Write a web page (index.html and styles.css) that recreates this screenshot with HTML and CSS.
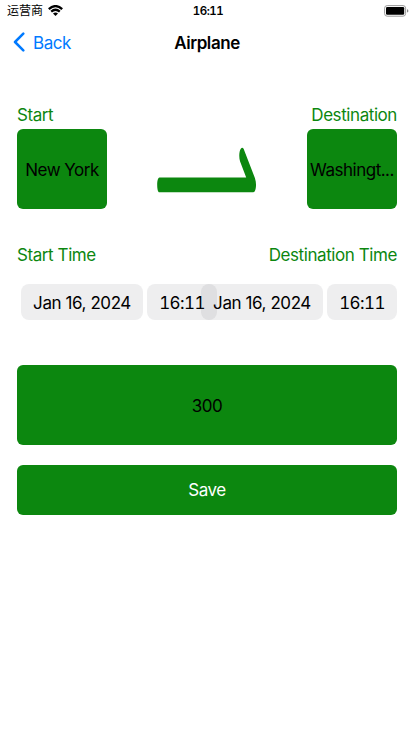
FILE: index.html
```html
<!DOCTYPE html>
<html lang="en">
<head>
<meta charset="utf-8">
<meta name="viewport" content="width=device-width, initial-scale=1">
<title>Airplane</title>
<link rel="stylesheet" href="styles.css">
</head>
<body>
<header class="status">
  <div class="carrier"><span lang="zh">运营商</span>
    <svg class="wifi" width="15" height="11" viewBox="0 0 15 11"><g fill="none" stroke="#000" stroke-width="2.3"><path d="M.8 4.1Q7.5-1.9 14.2 4.1"/><path d="M3.2 6.7Q7.5 2.8 11.8 6.7"/></g><path d="M5 8.5Q7.5 6.5 10 8.5L7.5 11Z"/></svg>
  </div>
  <span class="clock">16:11</span>
  <svg class="battery" width="25" height="12" viewBox="0 0 25 12"><rect x=".6" y=".6" width="21" height="10.6" rx="2.6" fill="#fff" stroke="#999" stroke-width="1"/><rect x="2" y="2" width="18.2" height="7.8" rx="1.2"/><path d="M23 4.2Q24.4 4.6 24.4 5.9T23 7.6Z" fill="#888"/></svg>
</header>
<nav class="nav">
  <a class="back"><svg width="12" height="20" viewBox="0 0 12 20"><path d="M10.3 1.6 2 10l8.3 8.4" fill="none" stroke="#007aff" stroke-width="2.5" stroke-linecap="round" stroke-linejoin="round"/></svg><span>Back</span></a>
  <h1>Airplane</h1>
</nav>
<main>
  <section class="route">
    <div class="place"><label>Start</label><button class="box">New York</button></div>
    <svg class="plane" width="100" height="46" viewBox="0 0 100 46"><path d="M2.5 30.6H89.2L83.1 14.5C81.8 10.5 82 4.5 83.8 1.8Q85.2-.2 86.6 1.8L97.9 31C99.5 35.5 99.3 41 97.9 44Q97.3 45.3 96 45.3H2.5C.8 45.3.2 41.5.2 38S.8 30.6 2.5 30.6Z" fill="#0c870f"/></svg>
    <div class="place end"><label>Destination</label><button class="box">Washingt...</button></div>
  </section>
  <section class="labels"><label>Start Time</label><label>Destination Time</label></section>
  <section class="pickers">
    <div class="picker"><span class="chip date">Jan 16, 2024</span><span class="chip time">16:11</span></div>
    <div class="picker second"><span class="chip date">Jan 16, 2024</span><span class="chip time">16:11</span></div>
  </section>
  <button class="box amount">300</button>
  <button class="box save">Save</button>
</main>
</body>
</html>
```
FILE: styles.css
```css
* { box-sizing: border-box; }
body { margin: 0; min-height: 736px; background: #fff; color: #000; font: 17px/20px Inter, "Noto Sans CJK SC", sans-serif; letter-spacing: -0.42px; }
svg { display: block; }
h1, button { margin: 0; font: inherit; letter-spacing: inherit; }
.status { display: grid; grid-template-columns: 1fr auto 1fr; height: 20px; padding: 0 5px 0 7px; align-items: center; font-size: 12px; }
.carrier { display: flex; align-items: center; gap: 5px; letter-spacing: 0; padding-top: 1px; }
.wifi { margin-top: -2px; }
.clock { font-weight: 600; font-size: 11.5px; letter-spacing: -0.45px; font-variant-numeric: tabular-nums; padding-top: 1px; }
.battery { justify-self: end; }
.nav { display: grid; grid-template-columns: 1fr auto 1fr; height: 44px; align-items: center; padding: 0 13px; }
.back { display: flex; align-items: center; gap: 8px; color: #007aff; }
.back span, .nav h1 { padding-top: 1px; }
.nav h1 { font-weight: 600; }
main { padding: 41px 17px 0; }
label { display: block; color: #0c870f; white-space: nowrap; }
.route { display: flex; justify-content: space-between; }
.place { width: 90px; }
.end { display: flex; flex-direction: column; align-items: flex-end; }
.box { display: flex; align-items: center; justify-content: center; width: 90px; height: 80px; margin-top: 4px; padding: 1px 0 0; border: 0; border-radius: 6px; background: #0c870f; color: #000; white-space: nowrap; }
.place .box { letter-spacing: -0.5px; }
.plane { margin-top: 42px; }
.labels { display: flex; justify-content: space-between; margin-top: 36px; }
.pickers { display: flex; justify-content: flex-end; margin-top: 19px; }
.picker { display: flex; gap: 4px; }
.second { margin-left: -16px; }
.chip { display: flex; align-items: center; justify-content: center; height: 36px; padding-top: 1px; border-radius: 8px; background: rgba(118, 118, 122, .12); }
.date { width: 122px; }
.time { width: 70px; letter-spacing: -0.6px; font-variant-numeric: tabular-nums; }
.amount { width: 100%; margin-top: 45px; }
.save { width: 100%; height: 50px; margin-top: 20px; padding: 0; color: #fff; }
```
